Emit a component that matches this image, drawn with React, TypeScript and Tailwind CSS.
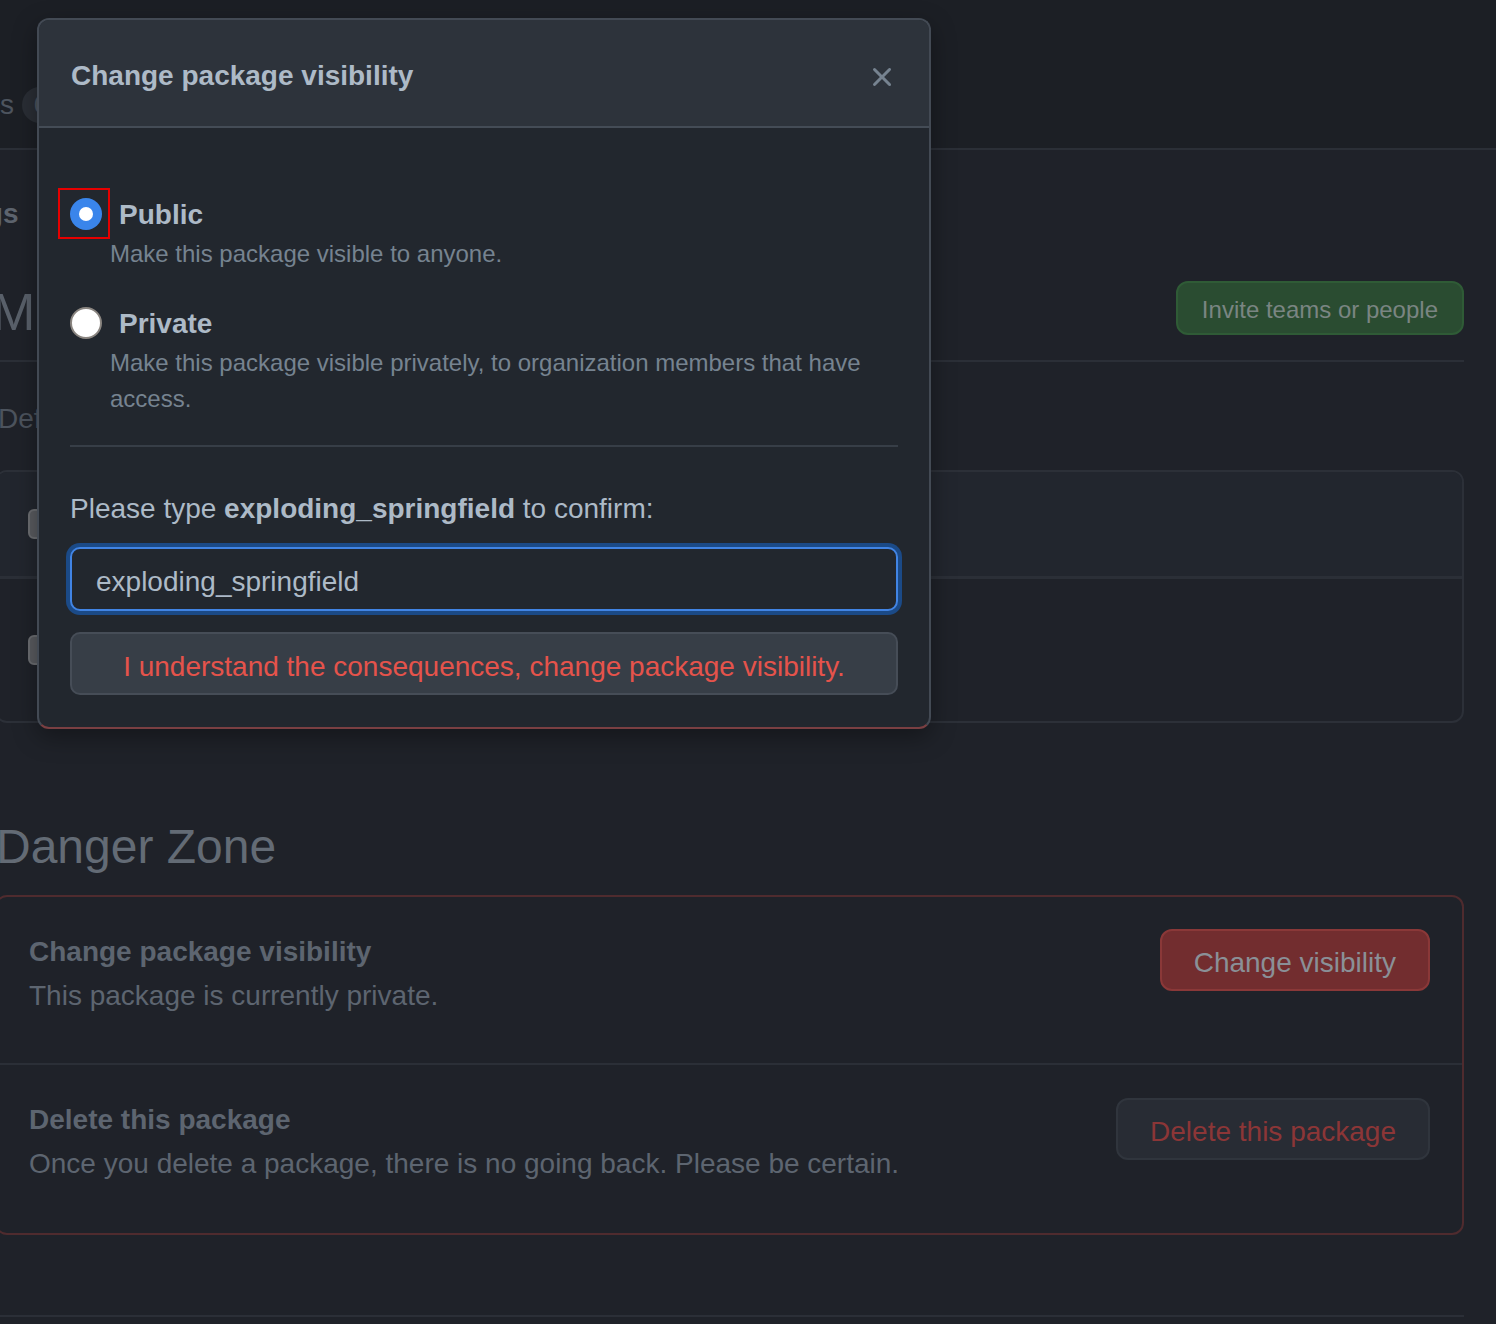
function CloseIcon() {
  return (
    <svg width="32" height="32" viewBox="0 0 16 16" fill="currentColor" aria-hidden="true">
      <path d="M3.72 3.72a.75.75 0 0 1 1.06 0L8 6.94l3.22-3.22a.749.749 0 0 1 1.275.326.749.749 0 0 1-.215.734L9.06 8l3.22 3.22a.749.749 0 0 1-.326 1.275.749.749 0 0 1-.734-.215L8 9.06l-3.22 3.22a.751.751 0 0 1-1.042-.018.751.751 0 0 1-.018-1.042L6.94 8 3.72 4.78a.75.75 0 0 1 0-1.06Z" />
    </svg>
  );
}

function PageBehind() {
  return (
    <>
      {/* top band */}
      <div className="h-[150px] border-b-2 border-[#2b2f37] bg-[#1c1f25] pt-[87px]">
        <div className="ml-[-109px] flex items-center gap-[8px]">
          <span className="text-[28px] leading-[36px] text-[#4d545e]">Packages</span>
          <span className="h-[36px] rounded-full bg-[#2a2e35] px-[12px] text-[24px] leading-[36px] text-[#4d545e]">0</span>
        </div>
      </div>

      <div className="ml-[-5px] w-[1469px]">
        <div className="ml-[-87px] mt-[44px] text-[28px] font-bold leading-[40px] text-[#5d646e]">Settings</div>

        <div className="mt-[47px] flex items-start justify-between border-b-2 border-[#2b2f37] pb-[19px]">
          <h2 className="ml-[-3px] mt-[2px] text-[52px] leading-[58px] text-[#59606a]">Manage access</h2>
          <button className="rounded-[12px] border-2 border-[#2f5b36] bg-[#2a4c31] px-[24px] pt-[3px] text-[24px] leading-[47px] text-[#7a8582]">
            Invite teams or people
          </button>
        </div>

        <p className="ml-[3px] mt-[37px] text-[28px] leading-[40px] text-[#4c535d]">Default role for new members</p>

        <div className="mt-[31px] overflow-hidden rounded-[12px] border-2 border-[#2c3038]">
          <div className="flex h-[107px] items-center border-b-[3px] border-[#2b2f37] bg-[#22262e] pl-[31px]">
            <span className="h-[30px] w-[30px] rounded-[6px] border-2 border-[#6c6e72] bg-[#5a5c60]" />
          </div>
          <div className="flex h-[142px] items-center pl-[31px]">
            <span className="h-[30px] w-[30px] rounded-[6px] border-2 border-[#6c6e72] bg-[#5a5c60]" />
          </div>
        </div>

        <h2 className="ml-[1px] mt-[96px] text-[48px] leading-[56px] text-[#636b75]">Danger Zone</h2>

        <div className="mt-[20px] rounded-[12px] border-2 border-[#4f2b2e]">
          <div className="flex items-start justify-between px-[32px] pb-[45px] pt-[33px]">
            <div>
              <h3 className="text-[28px] font-bold leading-[44px] text-[#5d6570]">Change package visibility</h3>
              <p className="text-[28px] leading-[44px] text-[#5d6570]">This package is currently private.</p>
            </div>
            <button className="-mt-px rounded-[12px] border-2 border-[#8a3838] bg-[#722d2f] px-[32px] pt-[6px] text-[28px] leading-[52px] text-[#8a9097]">
              Change visibility
            </button>
          </div>
          <div className="flex items-start justify-between border-t-2 border-[#2b2f37] px-[32px] pb-[47px] pt-[33px]">
            <div>
              <h3 className="text-[28px] font-bold leading-[44px] text-[#5d6570]">Delete this package</h3>
              <p className="text-[28px] leading-[44px] text-[#5d6570]">
                Once you delete a package, there is no going back. Please be certain.
              </p>
            </div>
            <button className="rounded-[12px] border-2 border-[#30353d] bg-[#282c34] px-[32px] pt-[6px] text-[28px] leading-[52px] text-[#8c3637]">
              Delete this package
            </button>
          </div>
        </div>

        <div className="mt-[80px] h-[2px] bg-[#2b2f37]" />
      </div>
    </>
  );
}

function VisibilityDialog() {
  return (
    <div className="absolute left-[37px] top-[18px] w-[894px] overflow-hidden rounded-[12px] border-2 border-[#434a54] border-b-[#7a3f42] bg-[#22272e] shadow-[0_8px_24px_rgba(0,0,0,0.35)]">
      <div className="flex h-[108px] items-center justify-between border-b-2 border-[#444c56] bg-[#2d333b] pl-[32px] pr-[31px] pt-[6px]">
        <h1 className="text-[28px] font-bold text-[#adbac7]">Change package visibility</h1>
        <button className="mt-[2px] text-[#768390]">
          <CloseIcon />
        </button>
      </div>

      <div className="px-[31px] pb-[32px] pt-[66px]">
        {/* Public */}
        <div className="flex items-center">
          <span className="relative h-[32px] w-[32px]">
            <span className="flex h-[32px] w-[32px] items-center justify-center rounded-full bg-[#3a85eb]">
              <span className="h-[14px] w-[14px] rounded-full bg-white" />
            </span>
            <span className="absolute left-[-12px] top-[-10px] h-[51px] w-[52px] border-2 border-[#e60000]" />
          </span>
          <span className="ml-[17px] pt-[2px] text-[28px] font-bold leading-[38px] text-[#adbac7]">Public</span>
        </div>
        <p className="mt-[2px] pl-[40px] text-[24px] leading-[36px] text-[#768390]">Make this package visible to anyone.</p>

        {/* Private */}
        <div className="mt-[31px] flex items-center">
          <span className="h-[32px] w-[32px] rounded-full border-2 border-[#8a8580] bg-white" />
          <span className="ml-[17px] pt-[2px] text-[28px] font-bold leading-[38px] text-[#adbac7]">Private</span>
        </div>
        <p className="mt-[2px] pl-[40px] text-[24px] leading-[36px] text-[#768390]">
          Make this package visible privately, to organization members that have access.
        </p>

        <div className="mt-[28px] h-[2px] bg-[#373e47]" />

        <p className="mt-[42px] text-[28px] leading-[40px] text-[#adbac7]">
          Please type <strong className="font-bold">exploding_springfield</strong> to confirm:
        </p>

        <input
          defaultValue="exploding_springfield"
          className="mt-[18px] h-[64px] w-full rounded-[10px] border-2 border-[#4184e4] bg-[#22272e] px-[24px] pt-[6px] text-[28px] text-[#adbac7] outline-none ring-4 ring-[#1b4a87]"
        />

        <button className="mt-[21px] h-[63px] w-full rounded-[10px] border-2 border-[#464d57] bg-[#373e47] pt-[7px] text-[28px] text-[#e5534b]">
          I understand the consequences, change package visibility.
        </button>
      </div>
    </div>
  );
}

export default function App() {
  return (
    <div className="relative h-[1324px] w-[1496px] overflow-hidden bg-[#1f2229] font-['Liberation_Sans',Arial,sans-serif]">
      <PageBehind />
      <VisibilityDialog />
    </div>
  );
}
